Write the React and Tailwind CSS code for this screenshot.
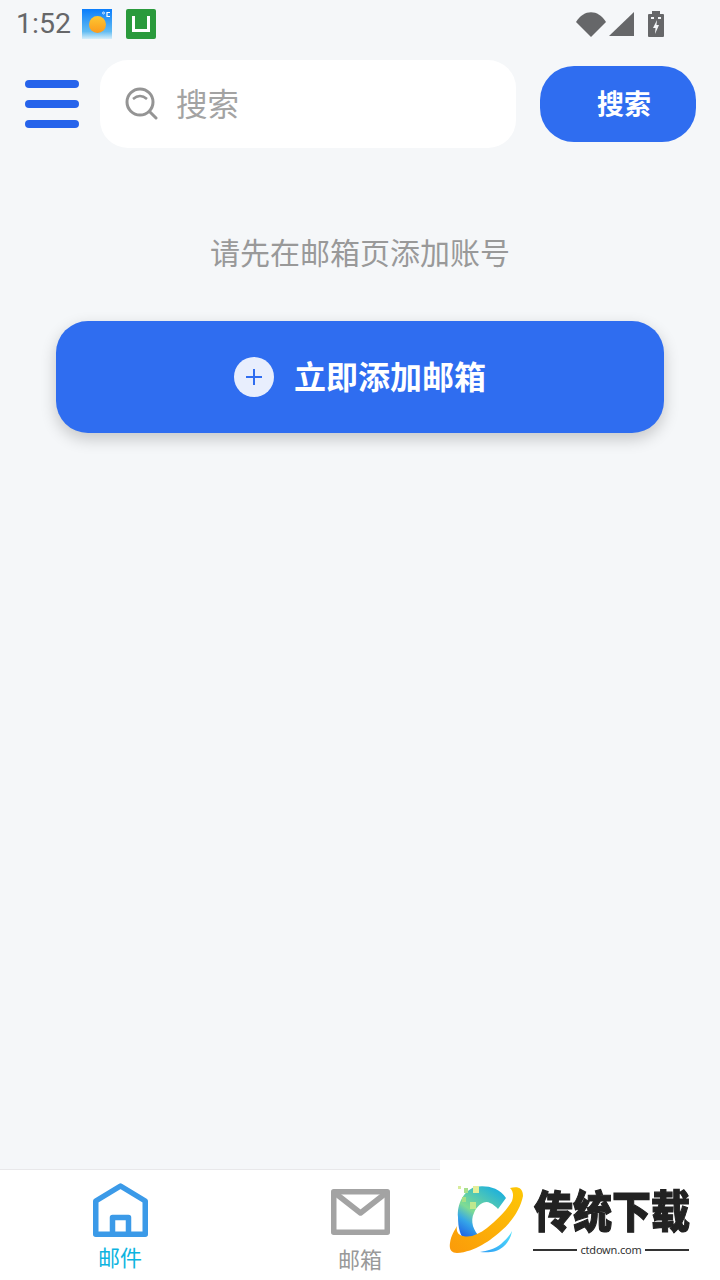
import React from "react";

const cjk = { fontFamily: '"Noto Sans CJK SC", "Noto Sans", sans-serif' };

const WeatherIcon = () => (
  <svg width="30" height="30" viewBox="0 0 30 30">
    <defs>
      <linearGradient id="sky" x1="0" y1="0" x2="0" y2="1">
        <stop offset="0" stopColor="#0a7dfc" />
        <stop offset="0.75" stopColor="#62bcf2" />
        <stop offset="1" stopColor="#d6eefa" />
      </linearGradient>
      <linearGradient id="sun" x1="0" y1="0" x2="0" y2="1">
        <stop offset="0" stopColor="#fdc832" />
        <stop offset="1" stopColor="#fb9a1c" />
      </linearGradient>
    </defs>
    <rect width="30" height="30" fill="url(#sky)" />
    <circle cx="15.5" cy="15.5" r="8.5" fill="url(#sun)" />
    <circle cx="21.5" cy="4" r="1" fill="none" stroke="#fff" strokeWidth="0.8" />
    <path d="M28 3.5 H25 V7.5 H28" fill="none" stroke="#fff" strokeWidth="1.2" />
  </svg>
);

const StatusBar = () => (
  <div className="h-12 flex items-center pl-4 pr-[56px] shrink-0">
    <span className="text-[28.5px] leading-none text-[#666769] mr-[11px]" style={{ fontFamily: "Roboto, sans-serif" }}>1:52</span>
    <WeatherIcon />
    <div className="w-[30px] h-[30px] ml-[14px] bg-[#2a9a3c] rounded-[2px] flex items-center justify-center">
      <div className="w-[18px] h-[16px] border-[3px] border-t-0 border-white" />
    </div>
    <div className="ml-auto flex items-center">
      <svg width="30" height="25" viewBox="0 0 30 25">
        <path d="M0 10 C8 -3 22 -3 30 10 L15 25 Z" fill="#666769" />
      </svg>
      <svg width="25" height="24" viewBox="0 0 25 24" className="ml-[3px]">
        <path d="M25 0 V24 H0 Z" fill="#666769" />
      </svg>
      <svg width="16" height="26" viewBox="0 0 16 26" className="ml-[14px]">
        <path fillRule="evenodd" d="M4 0 H12 V3 H15 Q16 3 16 4 V25 Q16 26 15 26 H1 Q0 26 0 25 V4 Q0 3 1 3 H4 Z M9 9 L5 17 H7.5 L7 23 L11 14 H8.5 Z M3 6 H6 V8 H3 Z M10 6 H13 V8 H10 Z" fill="#666769" />
      </svg>
    </div>
  </div>
);

const Header = () => (
  <div className="flex items-center h-[88px] mt-3 shrink-0 pl-[25px] pr-6">
    <div className="w-[54px] flex flex-col gap-[12px] blur-[0.5px]">
      <div className="h-[8px] rounded-full bg-[#2563eb]" />
      <div className="h-[8px] rounded-full bg-[#2563eb]" />
      <div className="h-[8px] rounded-full bg-[#2563eb]" />
    </div>
    <div className="ml-[21px] w-[416px] h-[88px] bg-white rounded-[28px] flex items-center pl-[25px]">
      <svg width="33" height="33" viewBox="0 0 33 33" fill="none" stroke="#949494" strokeWidth="3" className="-mt-[2px]">
        <circle cx="15" cy="15" r="13" />
        <path d="M8 12 Q15 6 22 12" strokeWidth="2.5" />
        <path d="M25 25 L31 31" strokeLinecap="round" />
      </svg>
      <span className="ml-[18px] pb-[3px] text-[31.5px] text-[#a3a3a3]" style={cjk}>搜索</span>
    </div>
    <button className="ml-6 w-[156px] h-[76px] pl-[12px] pb-[2px] bg-[#2f6df0] rounded-[34px] text-white text-[27px] font-bold flex items-center justify-center" style={cjk}>
      搜索
    </button>
  </div>
);

const NavItem = ({ label, color, children, textClass }) => (
  <div className="w-[240px] flex flex-col items-center">
    {children}
    <span className={`text-[22px] leading-none ${textClass}`} style={{ ...cjk, color }}>{label}</span>
  </div>
);

const Watermark = () => (
  <div className="absolute left-[440px] top-[1160px] w-[280px] h-[120px] bg-white">
    <svg width="76" height="70" viewBox="0 0 76 70" className="absolute left-[9px] top-[25px]">
      <defs>
        <linearGradient id="ring" x1="0" y1="1" x2="1" y2="0">
          <stop offset="0" stopColor="#fb9a0a" />
          <stop offset="1" stopColor="#fdc705" />
        </linearGradient>
        <linearGradient id="cee" x1="0.8" y1="0" x2="0.2" y2="1">
          <stop offset="0" stopColor="#18aee0" />
          <stop offset="0.55" stopColor="#7fdc92" />
          <stop offset="0.75" stopColor="#35a6e8" />
          <stop offset="1" stopColor="#1f5fe6" />
        </linearGradient>
        <linearGradient id="tail" x1="0" y1="1" x2="1" y2="0">
          <stop offset="0" stopColor="#2f9ff5" />
          <stop offset="1" stopColor="#52e0fb" />
        </linearGradient>
      </defs>
      <path d="M57 13 C50 2 36 0 26 2 C14 6 8 20 9 32 C9 42 11 52 17 56 L32 53 C24 46 21 36 25 28 C28 20 36 15 41 18 C44 19 47 22 49 24 Z" fill="url(#cee)" />
      <path d="M61 3 C68 1 74 2 74 11 C72 22 64 36 52 46 C42 55 26 67 8 68 C2 68 0 64 1 58 C2 50 6 45 8 41 C7 46 9 50 14 51 C22 53 30 49 38 43 C48 35 58 25 63 16 C65 10 64 6 61 3 Z" fill="url(#ring)" />
      <path d="M31 67 C38 66 46 64 52 59 C57 55 61 50 63 46 C62 52 59 58 54 62 C48 67 40 68 31 67 Z" fill="url(#tail)" />
      <rect x="9" y="1" width="3" height="3" fill="#d8ec9c" />
      <rect x="15" y="3" width="4" height="5" fill="#a8e08c" />
      <rect x="24" y="1" width="6" height="7" fill="#e4ef9a" />
      <rect x="13" y="12" width="4" height="5" fill="#a6e088" />
      <rect x="21" y="17" width="6" height="7" fill="#bfe88e" />
    </svg>
    <div className="absolute left-[94px] top-[25px] text-[39px] leading-[46px] font-black text-[#222] whitespace-nowrap scale-y-[1.15] [-webkit-text-stroke:1px_#222]" style={cjk}>传统下载</div>
    <div className="absolute left-[93px] top-[83px] w-[156px] flex items-center gap-[3px]">
      <div className="flex-1 h-[2px] bg-[#333]" />
      <span className="text-[11px] tracking-[-0.2px] leading-[14px] text-[#333]" style={{ fontFamily: '"Noto Sans", sans-serif' }}>ctdown.com</span>
      <div className="flex-1 h-[2px] bg-[#333]" />
    </div>
  </div>
);

export default function App() {
  return (
    <div className="relative w-[720px] h-[1280px] overflow-hidden bg-[#f5f7f9] flex flex-col">
      <StatusBar />
      <Header />
      <div className="flex-1 flex flex-col items-center">
        <p className="mt-[82px] text-[30px] leading-[42px] text-[#999]" style={cjk}>请先在邮箱页添加账号</p>
        <button className="mt-[49px] w-[608px] h-[112px] rounded-[32px] bg-[#2f6df0] shadow-[0_6px_16px_rgba(0,0,0,0.2)] flex items-center justify-center">
          <span className="w-10 h-10 rounded-full bg-[#e8eefd] flex items-center justify-center">
            <svg width="20" height="20" viewBox="0 0 20 20" stroke="#2f6df0" strokeWidth="2">
              <path d="M10 2 V18 M2 10 H18" />
            </svg>
          </span>
          <span className="ml-[20px] pb-[4px] text-[32px] font-bold text-white" style={cjk}>立即添加邮箱</span>
        </button>
      </div>
      <div className="h-[111px] bg-white border-t border-[#e8e8ea] flex shrink-0">
        <NavItem label="邮件" color="#0db4e0" textClass="mt-[8px]">
          <svg width="55" height="54" viewBox="0 0 55 54" fill="none" stroke="#3b9ae8" strokeWidth="5.5" strokeLinejoin="round" className="mt-[13px]">
            <path d="M2.75 18 L27.5 3 L52.25 18 V51.25 H2.75 Z" />
            <path d="M19.5 51.25 V34.5 H35.5 V51.25" />
          </svg>
        </NavItem>
        <NavItem label="邮箱" color="#999" textClass="mt-[12px]">
          <svg width="59" height="46" viewBox="0 0 59 46" fill="none" stroke="#a3a3a3" strokeWidth="5.5" strokeLinejoin="round" className="mt-[19px]">
            <rect x="2.75" y="2.75" width="53.5" height="40.5" />
            <path d="M4 4 L29.5 24 L55 4" />
          </svg>
        </NavItem>
      </div>
      <Watermark />
    </div>
  );
}
